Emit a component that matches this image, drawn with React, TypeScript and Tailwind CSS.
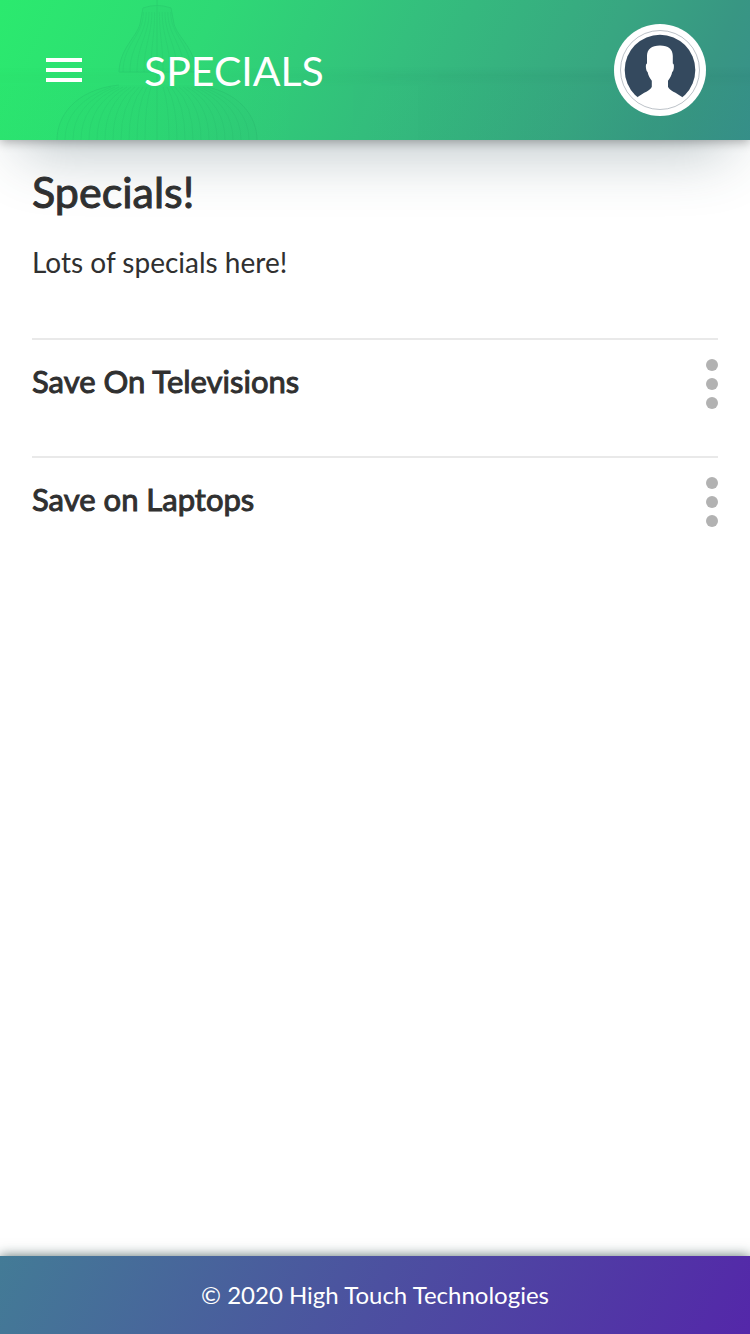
import React from "react";

const specials = ["Save On Televisions", "Save on Laptops"];

function MenuIcon() {
  return (
    <svg viewBox="0 0 36 24" className="h-6 w-9" fill="currentColor" aria-hidden="true">
      <rect width="36" height="4" />
      <rect y="10" width="36" height="4" />
      <rect y="20" width="36" height="4" />
    </svg>
  );
}

function Avatar() {
  return (
    <svg viewBox="0 0 92 92" className="size-23" aria-hidden="true">
      <circle cx="46" cy="46" r="46" fill="#fff" />
      <circle cx="46" cy="46" r="39.5" fill="none" stroke="#8f99a3" strokeWidth="0.6" />
      <circle cx="46" cy="46" r="35.3" fill="#34495e" />
      <path
        fill="#fff"
        d="M46 21.5C37.500 21.500 33 25.500 33 32v7.500c-1.200.4-1.300 2.500-1 4.700.3 2 .8 3.300 1.600 3.800.7 3.500 2.200 6.300 4.200 8.800v6c-1 3.500-8.500 6-14.500 10.500C28 80 36 83.500 46 83.500s18-3.500 22.500-10.200C62.500 68.800 55 66.300 54 62.800v-6c2-2.500 3.500-5.300 4.200-8.800.8-.5 1.300-1.800 1.600-3.800.3-2.200.2-4.300-1-4.700V32c0-6.500-4.300-10.500-12.800-10.500z"
      />
    </svg>
  );
}

const upperRibs = [-34, -27, -20, -13, -6, 6, 13, 20, 27, 34];
const lowerRibs = [-92, -84, -76, -68, -60, -52, -44, -36, -28, -20, -12, 12, 20, 28, 36, 44, 52, 60, 68, 76, 84, 92];

function Lamp() {
  return (
    <svg
      viewBox="0 0 210 140"
      className="absolute left-[52px] top-0 h-[140px] w-[210px]"
      fill="none"
      stroke="#1a8f58"
      strokeWidth="1"
      aria-hidden="true"
    >
      <g opacity="0.16">
        <path d="M105 0V140" />
        <path fill="#1c9c5c" fillOpacity="0.25" d="M91 8q14-5 28 0l3 16c4 14 21 24 22 48H67c1-24 17-34 21-48z" />
        <path fill="#1c9c5c" fillOpacity="0.15" d="M5 140c0-22 16-50 62-55h76c46 5 62 33 62 55z" stroke="none" />
        <path d="M5 140c0-22 16-50 62-55M143 85c46 5 62 33 62 55" />
      </g>
      <g opacity="0.09">
        {upperRibs.map((x) => (
          <path key={x} d={`M${105 + x * 0.4} 12C${105 + x * 0.4} 36 ${105 + x} 44 ${105 + x} 72`} />
        ))}
        {lowerRibs.map((x) => (
          <path key={x} d={`M${105 + x * 0.5} 87Q${105 + x} 104 ${105 + x} 140`} />
        ))}
      </g>
    </svg>
  );
}

export default function App() {
  return (
    <div className="flex min-h-screen flex-col bg-white font-['Lato',sans-serif] text-[#303030]">
      <header className="relative z-10 bg-[linear-gradient(115deg,#2bea6e_0%,#2ed975_27%,#34bf7d_52%,#38a681_77%,#389683_91%,#38908a_100%)] text-white shadow-[0_2px_10px_rgba(0,0,0,0.3),0_36px_60px_-22px_rgba(50,80,90,0.32)]">
        <div className="absolute inset-0 overflow-hidden">
          <div className="absolute inset-0 bg-[linear-gradient(180deg,transparent_48%,rgba(0,80,60,0.06)_54%,rgba(0,80,60,0.02)_62%)] [mask-image:linear-gradient(90deg,rgba(0,0,0,0.3)_30%,#000_60%)]" />
          <Lamp />
        </div>
        <div className="relative flex h-35 items-center pl-[46px] pr-11">
          <button type="button" aria-label="Open menu">
            <MenuIcon />
          </button>
          <span className="ml-[62px] flex-1 pt-0.5 text-[41px] leading-12">SPECIALS</span>
          <button type="button" aria-label="Account">
            <Avatar />
          </button>
        </div>
      </header>

      <main className="flex-1 px-8 pt-[26px]">
        <h1 className="text-[43px] leading-[52px] [-webkit-text-stroke:1px_#303030]">Specials!</h1>
        <p className="mt-[26px] text-[28px] leading-9">Lots of specials here!</p>
        <ul className="mt-[58px]">
          {specials.map((title) => (
            <li key={title} className="flex h-[118px] items-start justify-between border-t-2 border-[#e9e9e9] pt-[19px]">
              <h2 className="text-[31px] leading-11 [-webkit-text-stroke:1px_#303030]">{title}</h2>
              <button type="button" aria-label={`Options for ${title}`} className="flex flex-col gap-[7px] text-[#b2b2b2]">
                <span className="size-3 rounded-full bg-current" />
                <span className="size-3 rounded-full bg-current" />
                <span className="size-3 rounded-full bg-current" />
              </button>
            </li>
          ))}
        </ul>
      </main>

      <footer className="bg-[linear-gradient(115deg,#437b96_0%,#4c50a0_50%,#5427a9_100%)] py-6 text-center text-2xl leading-[30px] text-white shadow-[0_0_12px_rgba(20,50,50,0.7)]">
        © 2020 High Touch Technologies
      </footer>
    </div>
  );
}
